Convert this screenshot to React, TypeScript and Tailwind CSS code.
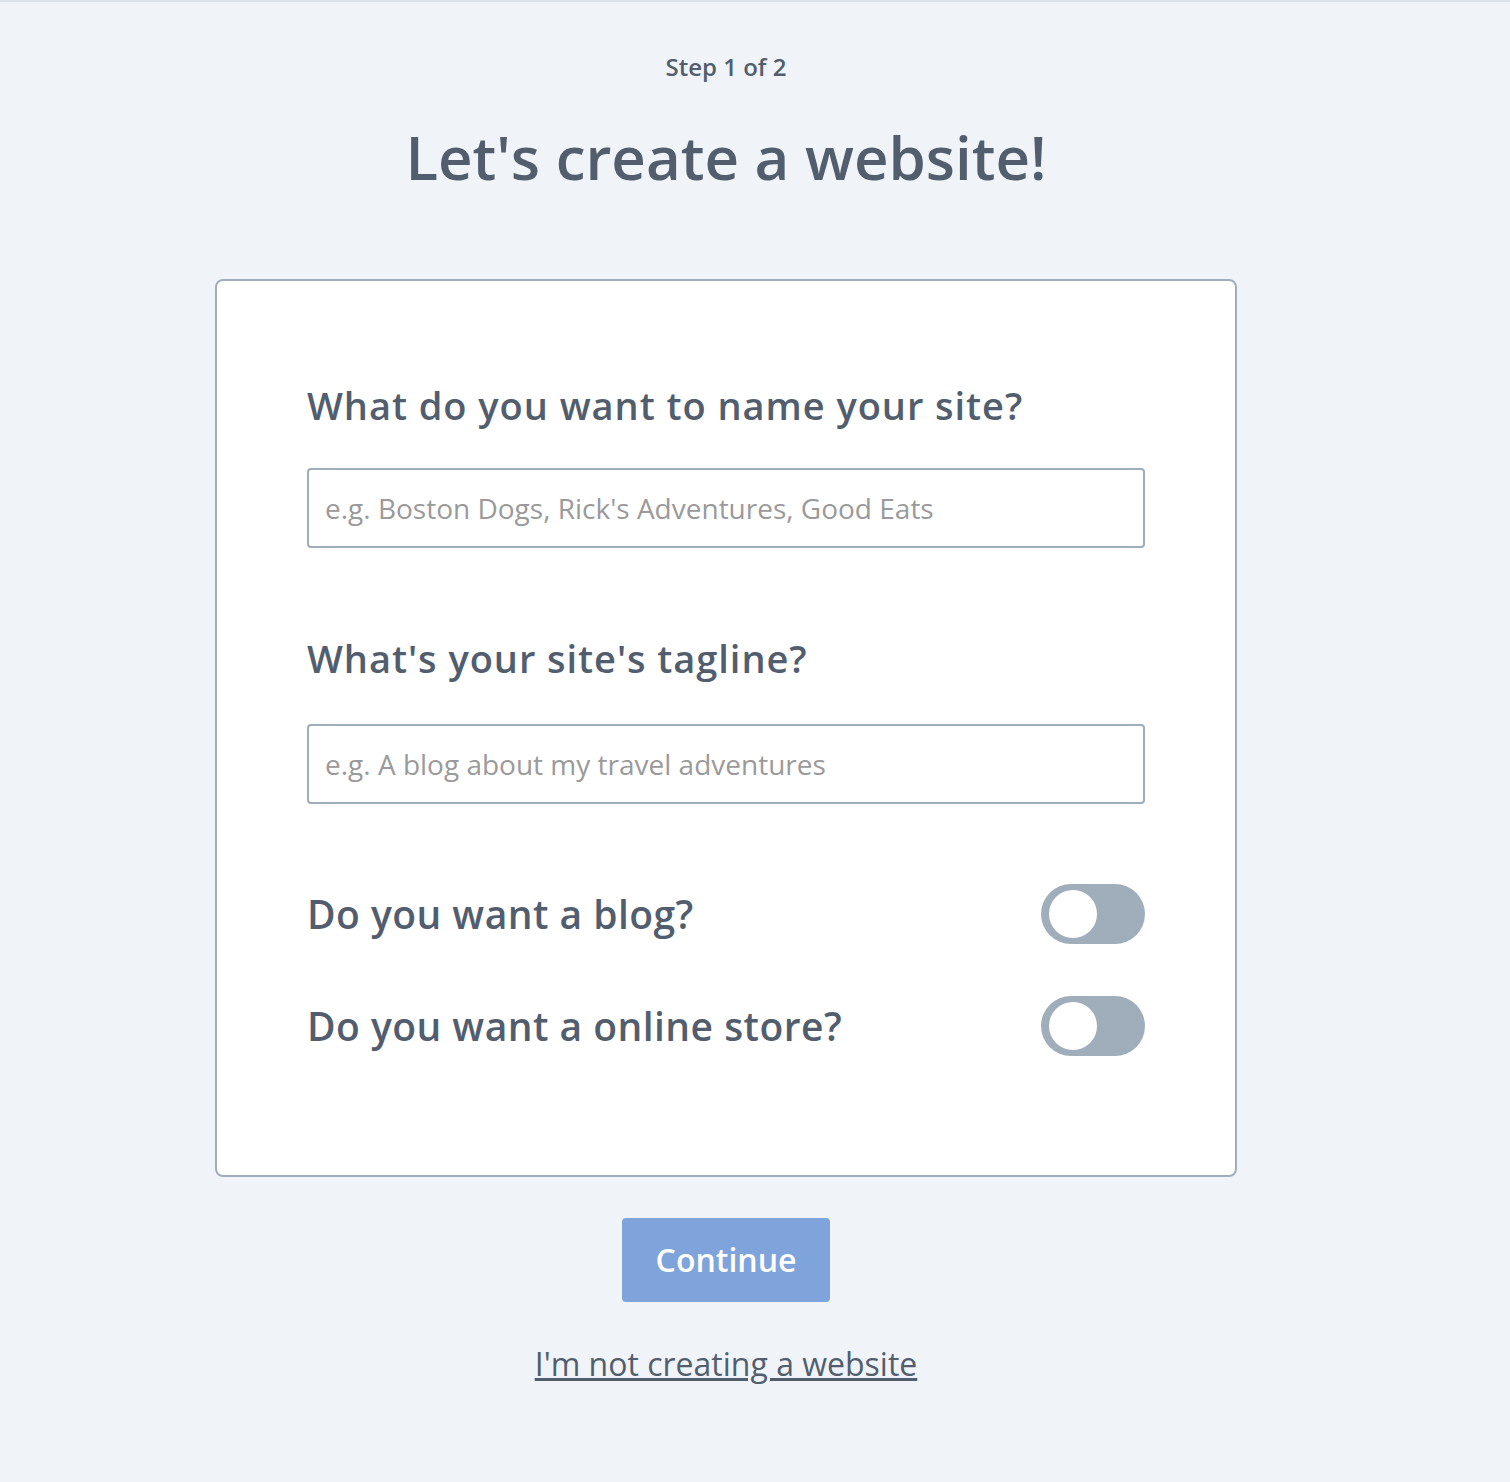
import React from 'react';

const Toggle: React.FC = () => (
  <button
    type="button"
    className="flex h-[60px] w-[104px] shrink-0 items-center rounded-full bg-[#a0aebb] pl-[8px]"
  >
    <span className="block h-[48px] w-[48px] rounded-full bg-white"></span>
  </button>
);

const App: React.FC = () => {
  return (
    <div
      className="min-h-[1482px] border-t-2 border-[#dce2e8] bg-[#f0f4f8] text-[#525e6e]"
      style={{ fontFamily: '"Open Sans", sans-serif' }}
    >
      <div className="flex w-[1452px] flex-col items-center pt-[49px]">
        <p className="text-[24px] font-semibold leading-[32px]">Step 1 of 2</p>
        <h1 className="mt-[34px] text-[60px] font-semibold leading-[80px]">Let's create a website!</h1>

        {/* Card */}
        <div className="mt-[82px] w-[1022px] rounded-[8px] border-2 border-[#a0aebb] bg-white px-[90px] pt-[99px] pb-[119px]">
          <label className="block text-[38px] font-semibold leading-[50px] tracking-[0.025em]">
            What do you want to name your site?
          </label>
          <input
            className="mt-[38px] block h-[80px] w-full rounded-[4px] border-2 border-[#a0aebb] px-[16px] text-[28px] placeholder:text-[#9a9a9a] outline-none"
            placeholder="e.g. Boston Dogs, Rick's Adventures, Good Eats"
          />

          <label className="mt-[85px] block text-[38px] font-semibold leading-[50px] tracking-[0.025em]">
            What's your site's tagline?
          </label>
          <input
            className="mt-[41px] block h-[80px] w-full rounded-[4px] border-2 border-[#a0aebb] px-[16px] text-[28px] placeholder:text-[#9a9a9a] outline-none"
            placeholder="e.g. A blog about my travel adventures"
          />

          <div className="mt-[80px] flex items-center justify-between">
            <span className="text-[39px] font-semibold leading-[60px] tracking-[0.012em]">Do you want a blog?</span>
            <Toggle />
          </div>
          <div className="mt-[52px] flex items-center justify-between">
            <span className="text-[39px] font-semibold leading-[60px] tracking-[0.012em]">Do you want a online store?</span>
            <Toggle />
          </div>
        </div>

        <button
          type="button"
          className="mt-[41px] h-[84px] w-[208px] rounded-[4px] bg-[#7fa3db] text-[32px] font-semibold text-white"
        >
          Continue
        </button>

        <a href="#" className="mt-[40px] text-[32px] leading-[44px] underline">
          I'm not creating a website
        </a>
      </div>
    </div>
  );
};

export default App;
